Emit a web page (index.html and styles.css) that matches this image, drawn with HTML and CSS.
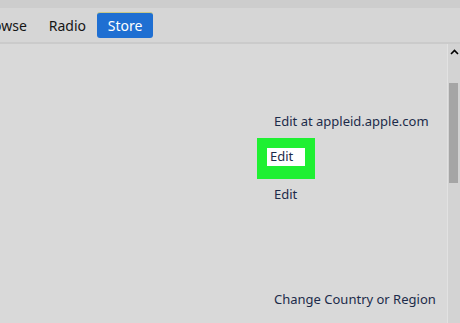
FILE: index.html
```html
<!DOCTYPE html>
<html>
<head>
<meta charset="utf-8">
<link rel="stylesheet" href="styles.css">
</head>
<body>
<div class="top-strip"></div>
<nav class="nav">
  <span class="tab tab-browse">owse</span>
  <span class="tab">Radio</span>
  <span class="tab tab-active">Store</span>
</nav>
<div class="main">
  <div class="content">
    <div class="links">
      <div class="link link-first">Edit at appleid.apple.com</div>
      <div class="highlight"><span class="link-box">Edit</span></div>
      <div class="link link-third">Edit</div>
      <div class="link link-last">Change Country or Region</div>
    </div>
  </div>
  <div class="scrollbar">
    <svg class="arrow" width="9" height="6" viewBox="0 0 9 6"><path d="M1 5 L4.5 1.5 L8 5" fill="none" stroke="#000" stroke-width="1.6"/></svg>
    <div class="thumb"></div>
  </div>
</div>
</body>
</html>
```
FILE: styles.css
```css
html, body {
  margin: 0;
  padding: 0;
  width: 460px;
  height: 323px;
  overflow: hidden;
  background: #d9d9d9;
  font-family: "Noto Sans", "Open Sans", sans-serif;
  color: #1c2b4a;
}
.top-strip {
  height: 8px;
  background: #cdcdcd;
}
.nav {
  height: 34px;
  background: #d6d6d6;
  border-bottom: 2px solid #cbcbcb;
  display: flex;
  align-items: center;
  font-size: 14px;
  color: #151515;
}
.tab {
  margin-right: 22px;
}
.tab-browse {
  margin-left: -7px;
}
.tab-active {
  margin-left: -11px;
  background: #1f6fd2;
  color: #fff;
  width: 56px;
  height: 26px;
  box-sizing: border-box;
  border-radius: 3px;
  display: flex;
  align-items: center;
  justify-content: center;
  border-top: 1px solid #c9c98a;
}
.main {
  display: flex;
  height: 279px;
}
.content {
  flex: 1;
  border-right: 1px solid #e2e2e2;
}
.links {
  padding: 68px 0 0 257px;
  font-size: 13px;
}
.link {
  padding-left: 17px;
  line-height: 18px;
}
.highlight {
  margin-top: 8px;
  width: 58px;
  height: 41px;
  background: #1ff032;
  display: flex;
  align-items: center;
  padding-left: 10px;
  box-sizing: border-box;
}
.link-box {
  background: #fff;
  width: 38px;
  height: 18px;
  line-height: 17px;
  box-sizing: border-box;
  padding-left: 3px;
  margin-top: -3px;
}
.link-third {
  margin-top: 6px;
}
.link-last {
  margin-top: 87px;
}
.scrollbar {
  width: 12px;
  background: #d3d3d3;
}
.arrow {
  display: block;
  margin: 5px 0 0 2px;
}
.thumb {
  margin-top: 28px;
  margin-left: 1px;
  width: 9px;
  height: 100px;
  background: #a5a5a5;
}
```
